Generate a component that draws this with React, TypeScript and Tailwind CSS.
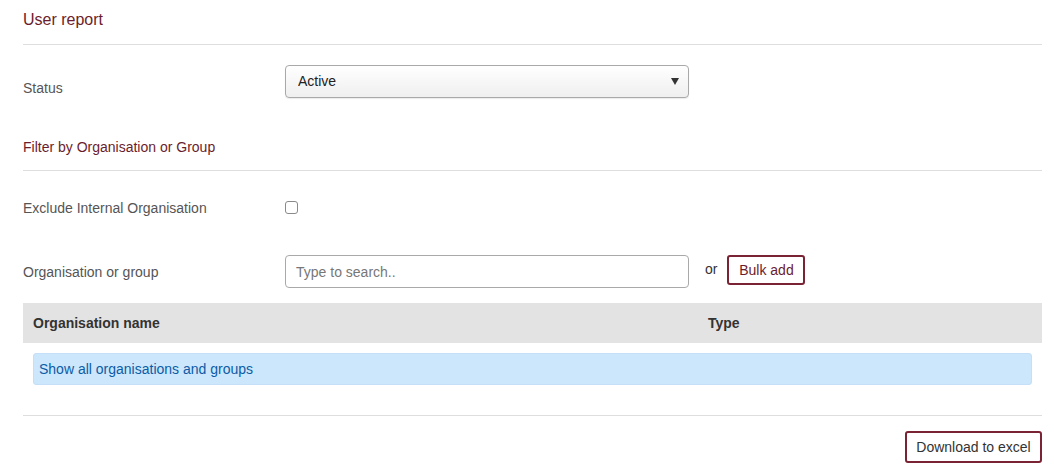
import React from 'react'

const maroon = 'text-[#6b1d2c]'

function FormRow({ label, labelOffset, children }: { label: string; labelOffset: string; children: React.ReactNode }) {
  return (
    <div className="flex">
      <div className={`w-[262px] shrink-0 text-[14px] leading-[20px] text-[#555] ${labelOffset}`}>{label}</div>
      <div className="flex items-start">{children}</div>
    </div>
  )
}

export default function App() {
  return (
    <div className="w-[1054px] h-[476px] bg-white overflow-hidden font-['Liberation_Sans',Arial,sans-serif]">
      <div className="pl-[23px] pr-[12px]">
        {/* Titulo */}
        <div className="h-[45px] border-b border-[#dedede] pt-[9px]">
          <h1 className={`text-[16px] leading-[22px] ${maroon}`}>User report</h1>
        </div>

        {/* Status */}
        <div className="mt-[20px]">
          <FormRow label="Status" labelOffset="mt-[13px]">
            <div className="relative w-[404px] h-[33px]">
              <select className="appearance-none w-full h-full rounded-[4px] border border-[#a9a9a9] bg-gradient-to-b from-white to-[#efefef] pl-[12px] text-[14px] text-[#222] shadow-[0_1px_1px_rgba(0,0,0,0.08)] outline-none">
                <option>Active</option>
              </select>
              <span className="pointer-events-none absolute right-[10px] top-[13px] w-0 h-0 border-l-[4px] border-r-[4px] border-t-[7px] border-l-transparent border-r-transparent border-t-[#333]" />
            </div>
          </FormRow>
        </div>

        {/* Filtro */}
        <div className="mt-[39px] pb-[13px] border-b border-[#dedede]">
          <h2 className={`text-[14px] leading-[20px] ${maroon}`}>Filter by Organisation or Group</h2>
        </div>

        <div className="mt-[27px]">
          <FormRow label="Exclude Internal Organisation" labelOffset="mt-0">
            <input
              type="checkbox"
              className="appearance-none mt-[3px] w-[13px] h-[13px] rounded-[3px] border border-[#8a8a8a] bg-white"
            />
          </FormRow>
        </div>

        <div className="mt-[37px]">
          <FormRow label="Organisation or group" labelOffset="mt-[7px]">
            <input
              type="text"
              placeholder="Type to search.."
              className="w-[404px] h-[33px] rounded-[4px] border border-[#a9a9a9] px-[10px] text-[14px] text-[#222] placeholder:text-[#777] outline-none"
            />
            <span className="ml-[16px] mt-[4px] text-[14px] leading-[20px] text-[#333]">or</span>
            <button className={`ml-[10px] h-[30px] w-[78px] rounded-[3px] border-2 border-[#7a2334] bg-white text-[14px] ${maroon}`}>
              Bulk add
            </button>
          </FormRow>
        </div>

        {/* Tabela */}
        <div className="mt-[15px]">
          <div className="flex h-[40px] items-center bg-[#e3e3e3] text-[14px] font-bold text-[#333]">
            <div className="w-[675px] pl-[10px]">Organisation name</div>
            <div className="pl-[10px]">Type</div>
          </div>
          <div className="mx-[10px] mt-[10px] flex h-[32px] items-center rounded-[3px] border border-[#c4dff7] bg-[#cce6fb] pl-[5px] text-[14px] text-[#0b5ca6]">
            Show all organisations and groups
          </div>
        </div>

        <div className="mt-[30px] border-t border-[#dedede]" />

        <div className="mt-[15px] flex justify-end">
          <button className="h-[32px] w-[137px] rounded-[3px] border-2 border-[#7a2334] bg-white text-[14px] text-[#333]">
            Download to excel
          </button>
        </div>
      </div>
    </div>
  )
}
